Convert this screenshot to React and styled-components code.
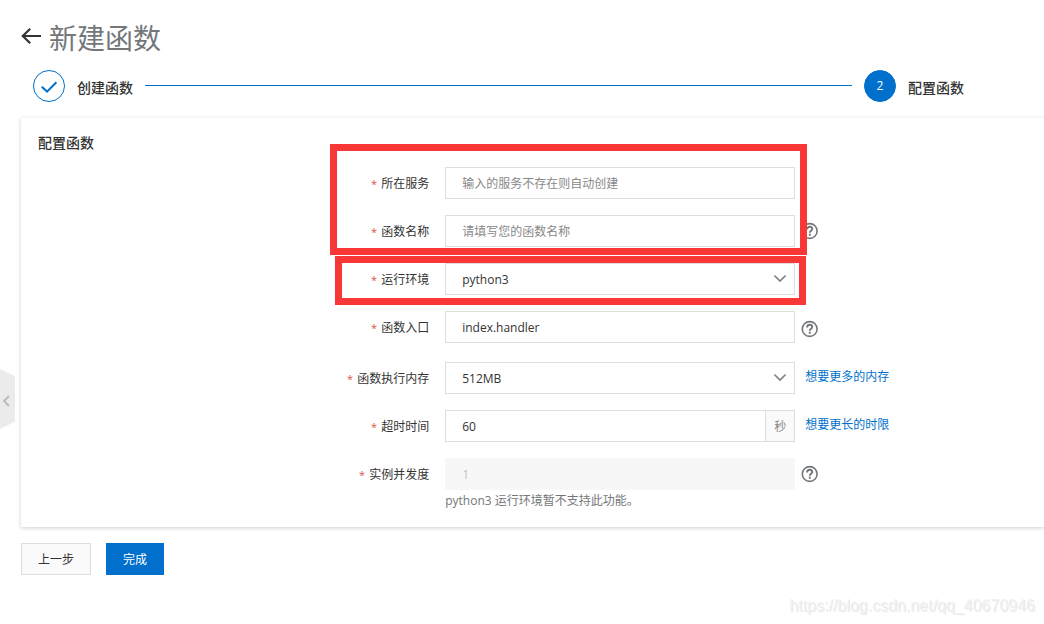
import React from "react";
import styled, { createGlobalStyle, css } from "styled-components";

const color = {
  primary: "#0070cc",
  text: "#333333",
  muted: "#73777a",
  hint: "#888888",
  border: "#dedede",
  red: "#fa3737",
};

const GlobalStyle = createGlobalStyle`
  *, *::before, *::after { box-sizing: border-box; }
  body {
    margin: 0;
    background: #ffffff;
    color: ${color.text};
    font-family: "Open Sans", "Noto Sans CJK SC", sans-serif;
    font-size: 12px;
    line-height: 16px;
    overflow-x: hidden;
  }
  button, input, select { font: inherit; color: inherit; }
`;

const Page = styled.main`
  padding: 16px 0 48px 21px;
`;

const Header = styled.header`
  display: flex;
  align-items: flex-start;
  gap: 8px;
  height: 44px;
`;

const IconButton = styled.button`
  display: flex;
  align-items: center;
  justify-content: center;
  padding: 0;
  border: 0;
  background: none;
  color: ${color.muted};
  cursor: pointer;
`;

const BackButton = styled(IconButton)`
  width: 20px;
  height: 40px;
  color: ${color.text};
`;

const Title = styled.h1`
  margin: 0;
  font-size: 28px;
  line-height: 44px;
  font-weight: 400;
  color: ${color.muted};
`;

const Steps = styled.ol`
  display: flex;
  align-items: center;
  gap: 12px;
  margin: 10px 0 16px;
  padding: 0 80px 0 12px;
  list-style: none;
`;

const Step = styled.li`
  display: flex;
  align-items: center;
  gap: 12px;
  flex: none;
`;

const StepLine = styled.li`
  flex: 1;
  height: 2px;
  border-top: 1px solid ${color.primary};
`;

const StepMark = styled.span`
  display: flex;
  align-items: center;
  justify-content: center;
  width: 32px;
  height: 32px;
  border: 1px solid ${color.primary};
  border-radius: 50%;
  background: ${(p) => (p.$current ? color.primary : "#ffffff")};
  color: ${(p) => (p.$current ? "#ffffff" : color.primary)};
`;

const StepName = styled.span`
  padding-top: 4px;
  font-size: 14px;
  line-height: 20px;
  font-weight: 500;
`;

const Card = styled.section`
  padding: 15px 0 17px 17px;
  background: #ffffff;
  box-shadow: 0 1px 4px rgba(0, 0, 0, 0.2);
`;

const CardTitle = styled.h2`
  margin: 0 0 14px;
  font-size: 14px;
  line-height: 20px;
  font-weight: 500;
`;

const Form = styled.form`
  display: flex;
  flex-direction: column;
  gap: 16px;
`;

const Row = styled.div`
  display: grid;
  grid-template-columns: 18fr 350px 11fr;
  align-items: start;
`;

const LabelCell = styled.div`
  padding-right: 16px;
  text-align: right;
`;

const Label = styled.label`
  display: inline-block;
  vertical-align: top;
  padding-top: 2px;
  line-height: 30px;

  &::before {
    content: "*";
    margin-right: 4px;
    color: #e0524a;
    font-size: 11px;
  }
`;

const Field = styled.div`
  position: relative;
`;

const Aside = styled.div`
  display: flex;
  align-items: center;
  min-height: ${(p) => (p.$tall ? 35 : 32)}px;
  padding-left: 6px;
`;

const control = css`
  display: block;
  width: 100%;
  height: 32px;
  padding: 0 16px;
  border: 1px solid ${color.border};
  border-radius: 0;
  background: #ffffff;
  outline: none;
`;

const TextInput = styled.input`
  ${control}

  &::placeholder { color: ${color.hint}; opacity: 1; }
  &:focus { border-color: ${color.primary}; }
  &:disabled {
    border-color: #f7f7f7;
    background: #f7f7f7;
    color: #c1c1c1;
  }
`;

const Select = styled.select`
  ${control}
  padding-top: 2px;
  appearance: none;
`;

const SelectArrow = styled.svg`
  position: absolute;
  top: 10px;
  right: 8px;
  pointer-events: none;
`;

const InputGroup = styled.div`
  display: flex;
`;

const Unit = styled.span`
  flex: none;
  width: 29px;
  height: 32px;
  padding-top: 2px;
  border: 1px solid ${color.border};
  border-left: 0;
  background: #fafafa;
  color: ${color.hint};
  line-height: 28px;
  text-align: center;
`;

const Note = styled.p`
  margin: 0;
  padding-top: 2px;
  line-height: 18px;
  color: ${color.muted};
`;

const Link = styled.a`
  padding: 0 0 2px 4px;
  color: ${color.primary};
  text-decoration: none;
`;

const HelpButton = styled(IconButton)`
  width: 18px;
  height: 18px;
`;

const Highlight = styled.span`
  position: absolute;
  z-index: 2;
  top: ${(p) => p.$top}px;
  left: ${(p) => p.$left}px;
  width: ${(p) => p.$width}px;
  height: ${(p) => p.$height}px;
  border: 7px solid ${color.red};
  pointer-events: none;
`;

const Actions = styled.div`
  display: flex;
  gap: 15px;
  margin-top: 16px;
`;

const Button = styled.button`
  height: 32px;
  padding: 2px 16px 0;
  border: 1px solid ${(p) => (p.$primary ? color.primary : color.border)};
  background: ${(p) => (p.$primary ? color.primary : "#fafafa")};
  color: ${(p) => (p.$primary ? "#ffffff" : color.text)};
  cursor: pointer;
`;

const Handle = styled(IconButton)`
  position: fixed;
  top: 369px;
  left: 0;
  width: 15px;
  height: 60px;
  padding: 3px 3px 0 0;
  background: #ebebeb;
  color: #bdbdbd;
  clip-path: polygon(0 0, 100% 12%, 100% 88%, 0 100%);
`;

const Watermark = styled.span`
  position: fixed;
  right: 9px;
  bottom: 8px;
  font-family: "Liberation Sans", sans-serif;
  font-size: 16px;
  line-height: 20px;
  color: #f0f0f0;
  text-shadow: 1px 1px 1px #e6e6e6;
`;

function Help() {
  return (
    <HelpButton type="button" aria-label="帮助">
      <svg width="18" height="18" viewBox="0 0 18 18" fill="none" stroke="currentColor">
        <circle cx="8.7" cy="9" r="7.4" strokeWidth="1.6" />
        <path d="M6.1 7.4C6.1 5.7 7.2 4.8 8.7 4.8s2.5.9 2.5 2.2c0 1.7-2.4 1.9-2.4 3.8" strokeWidth="1.9" />
        <path d="M7.8 12.7h2" strokeWidth="2" />
      </svg>
    </HelpButton>
  );
}

function Arrow() {
  return (
    <SelectArrow width="14" height="12" viewBox="0 0 14 12" fill="none" stroke="#808080" strokeWidth="1.7">
      <path d="M1.4 2.5L7 8.1l5.6-5.6" />
    </SelectArrow>
  );
}

function FormRow({ id, label, aside, tall, children }) {
  return (
    <Row>
      <LabelCell>
        <Label htmlFor={id}>{label}</Label>
      </LabelCell>
      <Field>{children}</Field>
      <Aside $tall={tall}>{aside}</Aside>
    </Row>
  );
}

export default function App() {
  return (
    <>
      <GlobalStyle />
      <Page>
        <Header>
          <BackButton type="button" aria-label="返回">
            <svg width="20" height="18" viewBox="0 0 20 18" fill="none" stroke="currentColor" strokeWidth="2.2">
              <path d="M1.8 9H20M9.2 1.8L1.8 9l7.4 7.2" />
            </svg>
          </BackButton>
          <Title>新建函数</Title>
        </Header>

        <Steps>
          <Step>
            <StepMark>
              <svg width="18" height="14" viewBox="0 0 18 14" fill="none" stroke="currentColor" strokeWidth="2">
                <path d="M1.8 7.8l5.2 4.8 9.4-9.4" />
              </svg>
            </StepMark>
            <StepName>创建函数</StepName>
          </Step>
          <StepLine aria-hidden="true" />
          <Step aria-current="step">
            <StepMark $current>2</StepMark>
            <StepName>配置函数</StepName>
          </Step>
        </Steps>

        <Card>
          <CardTitle>配置函数</CardTitle>
          <Form id="config" onSubmit={(e) => e.preventDefault()}>
            <FormRow id="service" label="所在服务">
              <TextInput id="service" placeholder="输入的服务不存在则自动创建" />
              <Highlight $top={-23} $left={-115} $width={477} $height={111} />
            </FormRow>
            <FormRow id="name" label="函数名称" aside={<Help />}>
              <TextInput id="name" placeholder="请填写您的函数名称" />
            </FormRow>
            <FormRow id="runtime" label="运行环境">
              <Select id="runtime" defaultValue="python3">
                <option>python3</option>
              </Select>
              <Arrow />
              <Highlight $top={-7} $left={-110} $width={471} $height={49} />
            </FormRow>
            <FormRow id="handler" label="函数入口" aside={<Help />} tall>
              <TextInput id="handler" defaultValue="index.handler" />
            </FormRow>
            <FormRow id="memory" label="函数执行内存" aside={<Link href="#memory">想要更多的内存</Link>}>
              <Select id="memory" defaultValue="512MB">
                <option>512MB</option>
              </Select>
              <Arrow />
            </FormRow>
            <FormRow id="timeout" label="超时时间" aside={<Link href="#timeout">想要更长的时限</Link>}>
              <InputGroup>
                <TextInput id="timeout" defaultValue="60" />
                <Unit>秒</Unit>
              </InputGroup>
            </FormRow>
            <FormRow id="concurrency" label="实例并发度" aside={<Help />}>
              <TextInput id="concurrency" defaultValue="1" disabled />
              <Note>python3 运行环境暂不支持此功能。</Note>
            </FormRow>
          </Form>
        </Card>

        <Actions>
          <Button type="button">上一步</Button>
          <Button type="submit" form="config" $primary>完成</Button>
        </Actions>
      </Page>

      <Handle type="button" aria-label="收起">
        <svg width="8" height="12" viewBox="0 0 8 12" fill="none" stroke="currentColor" strokeWidth="2">
          <path d="M7 1L2 6l5 5" />
        </svg>
      </Handle>
      <Watermark>https://blog.csdn.net/qq_40670946</Watermark>
    </>
  );
}
